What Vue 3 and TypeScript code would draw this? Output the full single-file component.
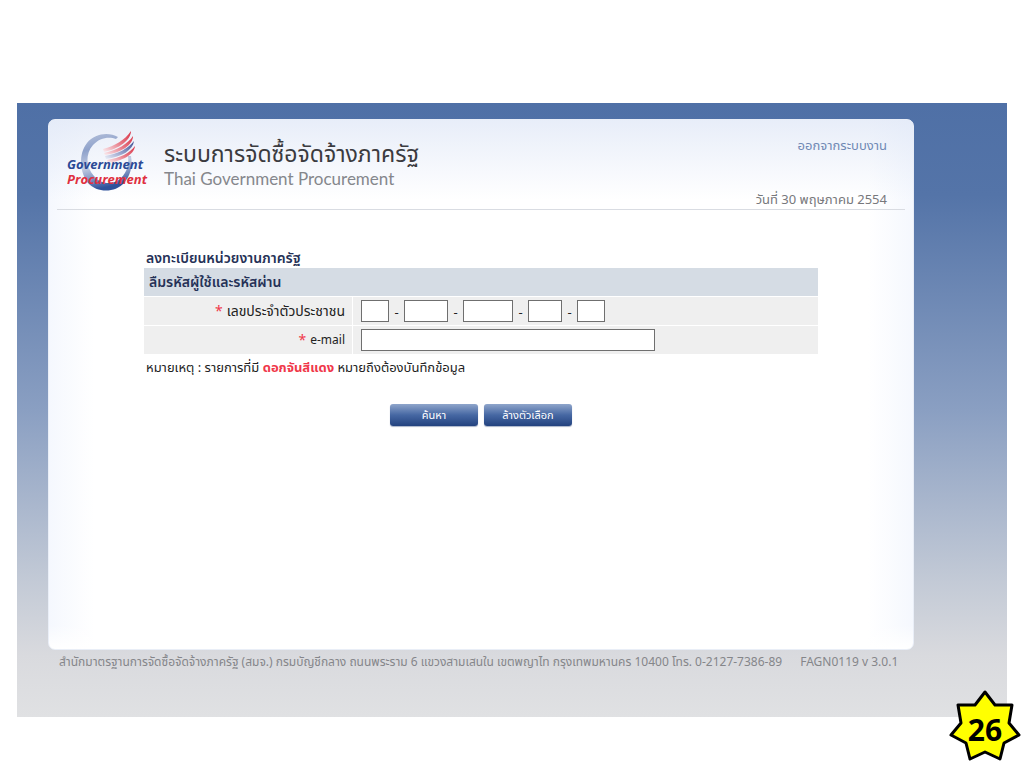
<script setup lang="ts">
import { ref } from 'vue'

interface IdPart {
  label: string
  size: string
  length: number
}

const idParts: IdPart[] = [
  { label: 'หลักที่ 1', size: 'w-1', length: 1 },
  { label: 'หลักที่ 2-5', size: 'w-4', length: 4 },
  { label: 'หลักที่ 6-10', size: 'w-5', length: 5 },
  { label: 'หลักที่ 11-12', size: 'w-2', length: 2 },
  { label: 'หลักที่ 13', size: 'w-1', length: 1 },
]

const idValues = ref<string[]>(idParts.map(() => ''))
const email = ref('')

function clearForm(): void {
  idValues.value = idParts.map(() => '')
  email.value = ''
}
</script>

<template>
  <div class="slide">
    <div class="backdrop">
      <main class="panel">
        <header class="header">
          <div class="brand">
            <svg class="logo" viewBox="0 0 84 64" role="img" aria-label="Government Procurement">
              <defs>
                <linearGradient id="ring" x1="0" y1="0" x2="0.2" y2="1">
                  <stop offset="0" stop-color="#b4c0da" />
                  <stop offset="0.3" stop-color="#8fa2cb" />
                  <stop offset="0.6" stop-color="#c3cde3" />
                  <stop offset="0.8" stop-color="#8296c4" />
                  <stop offset="1" stop-color="#2f529b" />
                </linearGradient>
                <linearGradient id="red" x1="0" y1="1" x2="1" y2="0">
                  <stop offset="0" stop-color="#fbeef1" />
                  <stop offset="0.5" stop-color="#e77e8b" />
                  <stop offset="1" stop-color="#d93144" />
                </linearGradient>
                <linearGradient id="blue" x1="0" y1="1" x2="1" y2="0">
                  <stop offset="0" stop-color="#eceff8" />
                  <stop offset="0.5" stop-color="#8e9ac6" />
                  <stop offset="1" stop-color="#3c4f92" />
                </linearGradient>
              </defs>
              <path
                fill="url(#ring)"
                fill-rule="evenodd"
                d="M51 7C42 2 28 3 20 13C11 24 13 43 21 53C30 63 48 63 57 53C63 46 66 37 64 26L61 26C62 35 60 42 54 48C46 56 33 54 27 46C19 37 18 24 26 15C32 8 42 6 49 9Z"
              />
              <path fill="url(#red)" d="M36 19C48 16 58 10 64 1C64 10 52 19 37 22Z" />
              <path fill="url(#red)" d="M37 23C50 20 61 14 66 6C66 15 54 23 38 25Z" />
              <path fill="url(#blue)" d="M38 26C51 24 62 18 67 11C66 20 55 27 39 29Z" />
              <path fill="url(#red)" d="M40 30C53 28 63 23 68 16C67 25 55 31 41 33Z" />
              <text class="logo-top" x="0" y="39">Government</text>
              <text class="logo-bottom" x="0" y="54">Procurement</text>
            </svg>
            <div class="titles">
              <h1 class="title-th">ระบบการจัดซื้อจัดจ้างภาครัฐ</h1>
              <p class="title-en">Thai Government Procurement</p>
            </div>
          </div>
          <div class="session">
            <a class="logout" href="#logout">ออกจากระบบงาน</a>
            <span class="date">วันที่ 30 พฤษภาคม 2554</span>
          </div>
        </header>

        <form class="form" @submit.prevent>
          <h2 class="form-title">ลงทะเบียนหน่วยงานภาครัฐ</h2>
          <h3 class="form-subtitle">ลืมรหัสผู้ใช้และรหัสผ่าน</h3>
          <div class="row">
            <label class="cell name" for="id-0"><span class="star">*</span> เลขประจำตัวประชาชน</label>
            <div class="cell value">
              <template v-for="(part, i) in idParts" :key="i">
                <span v-if="i > 0" class="dash">-</span>
                <input
                  :id="`id-${i}`"
                  v-model="idValues[i]"
                  class="box"
                  :class="part.size"
                  type="text"
                  :maxlength="part.length"
                  :aria-label="part.label"
                />
              </template>
            </div>
          </div>
          <div class="row">
            <label class="cell name latin" for="email"><span class="star">*</span> e-mail</label>
            <div class="cell value">
              <input id="email" v-model="email" class="box w-mail" type="text" />
            </div>
          </div>
          <p class="note">
            หมายเหตุ : รายการที่มี <strong class="red">ดอกจันสีแดง</strong> หมายถึงต้องบันทึกข้อมูล
          </p>
          <div class="actions">
            <button class="btn" type="submit">ค้นหา</button>
            <button class="btn" type="button" @click="clearForm">ล้างตัวเลือก</button>
          </div>
        </form>
      </main>

      <footer class="footer">
        <span>สำนักมาตรฐานการจัดซื้อจัดจ้างภาครัฐ (สมจ.) กรมบัญชีกลาง ถนนพระราม 6 แขวงสามเสนใน เขตพญาไท กรุงเทพมหานคร 10400 โทร. 0-2127-7386-89</span>
        <span>FAGN0119 v 3.0.1</span>
      </footer>
    </div>

    <div class="badge">
      <svg class="badge-star" viewBox="0 0 72 72" aria-hidden="true">
        <path
          d="M36 2L46 15L63 15L60 33L70 45L55 53L51 69L36 62L21 69L17 53L2 45L12 33L9 15L26 15Z"
          fill="#ffff00"
          stroke="#000"
          stroke-width="3"
          stroke-linejoin="round"
        />
      </svg>
      <span class="badge-number">26</span>
    </div>
  </div>
</template>

<style>
body {
  margin: 0;
  background: #fff;
}
</style>

<style scoped>
.slide {
  position: relative;
  box-sizing: border-box;
  min-height: 100vh;
  padding: 103px 17px 51px;
  font-family: 'Noto Sans', 'Noto Sans Thai', Tahoma, sans-serif;
  font-size: 13px;
  line-height: 16px;
  color: #222;
  display: flex;
}
.backdrop {
  flex: 1;
  box-sizing: border-box;
  padding: 16px 93px 0 31px;
  background: linear-gradient(#4f70a6 0%, #5474a8 15%, #8a9fc2 50%, #c3cad6 78%, #d9dade 90%, #e0e1e3 100%);
  display: flex;
  flex-direction: column;
}
.panel {
  box-sizing: border-box;
  min-height: 531px;
  padding: 0 8px;
  border: 1px solid #e9eef7;
  border-radius: 7px;
  background:
    linear-gradient(rgba(222, 230, 246, 0.7), rgba(255, 255, 255, 0) 80px),
    linear-gradient(0deg, #fff, rgba(255, 255, 255, 0) 24px),
    linear-gradient(90deg, #f5f8fe, #fff 45px, #fff calc(100% - 45px), #f5f8fe);
}
.header {
  box-sizing: border-box;
  height: 90px;
  padding: 10px 18px 0 10px;
  border-bottom: 1px solid #d9dce2;
  display: flex;
  justify-content: space-between;
}
.brand {
  display: flex;
  gap: 13px;
}
.logo {
  width: 84px;
  height: 64px;
}
.logo-top,
.logo-bottom {
  font-family: 'Open Sans', 'Noto Sans', sans-serif;
  font-size: 13px;
  font-weight: 700;
  font-style: italic;
}
.logo-top {
  fill: #2b4a96;
}
.logo-bottom {
  fill: #e0303f;
}
.titles {
  padding-top: 7px;
}
.title-th {
  margin: 0;
  font-size: 23px;
  line-height: 32px;
  font-weight: 400;
  color: #3b3b3f;
  white-space: nowrap;
}
.title-en {
  margin: 0;
  font-family: Lato, sans-serif;
  font-size: 17px;
  line-height: 20px;
  color: #85878c;
  white-space: nowrap;
}
.session {
  display: flex;
  flex-direction: column;
  justify-content: space-between;
  align-items: flex-end;
  padding: 7px 0 2px;
}
.logout {
  color: #7089b5;
  text-decoration: none;
}
.date {
  color: #77787c;
}
.form {
  margin: 38px 87px 0;
}
.form-title,
.form-subtitle {
  margin: 0;
  font-size: 14px;
  line-height: 20px;
  font-weight: 600;
  color: #263257;
}
.form-title {
  padding-left: 2px;
}
.form-subtitle {
  padding: 4px 5px;
  background: #d5dce4;
}
.row {
  display: flex;
  gap: 1px;
  margin-top: 1px;
}
.cell {
  box-sizing: border-box;
  height: 28px;
  background: #efefef;
  display: flex;
  align-items: center;
}
.name {
  width: 208px;
  padding-right: 7px;
  justify-content: flex-end;
  gap: 4px;
  font-size: 14px;
}
.latin {
  font-size: 12px;
}
.value {
  flex: 1;
  padding-left: 8px;
}
.star {
  font-size: 14px;
}
.star,
.red {
  color: #f0384a;
}
.box {
  box-sizing: border-box;
  height: 22px;
  padding: 0 3px;
  border: 1px solid #6f6f6f;
  background: #fff;
  font: inherit;
}
.dash {
  width: 15px;
  padding-top: 2px;
  text-align: center;
}
.w-1 {
  width: 28px;
}
.w-2 {
  width: 34px;
}
.w-4 {
  width: 44px;
}
.w-5 {
  width: 50px;
}
.w-mail {
  width: 294px;
}
.note {
  margin: 5px 2px 0;
}
.actions {
  display: flex;
  justify-content: center;
  gap: 6px;
  margin-top: 29px;
}
.btn {
  width: 88px;
  height: 22px;
  padding: 0;
  border: 0;
  border-radius: 3px;
  background: linear-gradient(#8fa5cb, #4668a3 50%, #23427f);
  box-shadow: 0 1px 1px #a9b4c9;
  color: #fff;
  font: inherit;
  font-size: 11px;
}
.footer {
  padding: 4px 11px 0;
  font-size: 12px;
  color: #85868a;
  display: flex;
  gap: 18px;
  white-space: nowrap;
}
.badge {
  position: absolute;
  right: 3px;
  bottom: 6px;
  width: 72px;
  height: 72px;
  display: grid;
  place-items: center;
}
.badge-star {
  position: absolute;
  inset: 0;
}
.badge-number {
  position: relative;
  padding-top: 8px;
  font-family: 'Open Sans', sans-serif;
  font-size: 30px;
  line-height: 32px;
  font-weight: 700;
  color: #000;
}
</style>
